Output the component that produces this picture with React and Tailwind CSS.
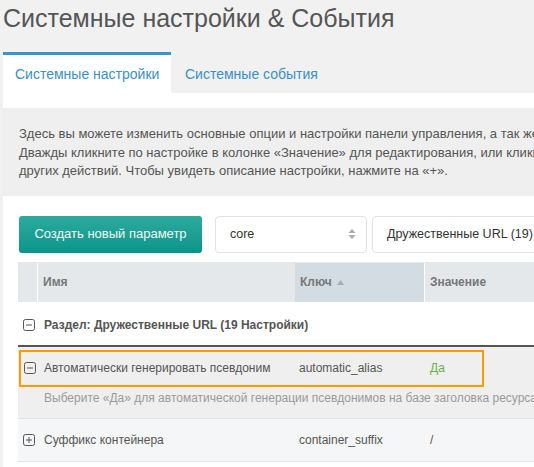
import { useState } from 'react'

const FONT = { fontFamily: '"Liberation Sans", Arial, sans-serif' }

function BoxIcon({ plus }) {
  return (
    <svg width="12" height="12" viewBox="0 0 12 12" fill="none" aria-hidden="true" className="text-[#555]">
      <rect x="0.5" y="0.5" width="11" height="11" rx="2" stroke="currentColor" />
      <path d="M3 6h6" stroke="currentColor" />
      {plus && <path d="M6 3v6" stroke="currentColor" />}
    </svg>
  )
}

function SelectBox({ value, className }) {
  return (
    <div className={`flex h-[37px] items-center justify-between rounded-[4px] border border-[#e2e2e2] bg-white pl-[14px] pr-[10px] text-[12.5px] text-[#333] ${className}`}>
      <span className="whitespace-nowrap">{value}</span>
      <svg width="8" height="12" viewBox="0 0 8 12" aria-hidden="true" className="text-[#aaa]">
        <path d="M4 1 7.5 5H.5Z" fill="currentColor" />
        <path d="M4 11 .5 7h7Z" fill="currentColor" />
      </svg>
    </div>
  )
}

export default function App() {
  const [tab, setTab] = useState(0)

  return (
    <div className="h-screen overflow-hidden bg-[#f1f1f1]" style={FONT}>
      {/* Title */}
      <h1 className="whitespace-nowrap pl-[3px] pt-[3px] text-[25px] leading-[30px] text-[#555]">
        Системные настройки &amp; События
      </h1>

      {/* Tabs */}
      <div className="ml-[3px] mt-[19px] flex w-[800px] items-end">
        <button
          type="button"
          onClick={() => setTab(0)}
          className={`h-[41px] w-[168px] border-t-[3px] pl-[12px] pt-[1px] text-left text-[14px] ${tab === 0 ? 'border-[#3697cd] bg-white text-[#3a8fc6]' : 'border-transparent text-[#3a8fc6]'}`}
        >
          Системные настройки
        </button>
        <button
          type="button"
          onClick={() => setTab(1)}
          className={`h-[41px] border-t-[3px] px-[14px] pt-[1px] text-left text-[14px] ${tab === 1 ? 'border-[#3697cd] bg-white text-[#3a8fc6]' : 'border-transparent text-[#3a8fc6]'}`}
        >
          Системные события
        </button>
      </div>

      {/* Panel */}
      <div className="ml-[3px] w-[800px] bg-white pt-[15px]">
        <div className="bg-[#efefef] px-[16px] pb-[15px] pt-[17px] text-[13px] leading-[18.5px] text-[#555]">
          <p className="whitespace-nowrap">Здесь вы можете изменить основные опции и настройки панели управления, а так же просмотреть системную информацию.</p>
          <p className="whitespace-nowrap">Дважды кликните по настройке в колонке «Значение» для редактирования, или кликните правой кнопкой мыши для</p>
          <p className="whitespace-nowrap">других действий. Чтобы увидеть описание настройки, нажмите на «+».</p>
        </div>

        <div className="pl-[15px] pt-[20px]">
          {/* Controls */}
          <div className="flex items-center gap-[13px] pl-[1px]">
            <button
              type="button"
              className="h-[37px] w-[183px] rounded-[3px] bg-gradient-to-b from-[#2caa9d] to-[#08958a] text-[13px] text-[#eef8f7]"
            >
              Создать новый параметр
            </button>
            <SelectBox value="core" className="w-[152px]" />
            <SelectBox value="Дружественные URL (19)" className="-ml-[8px] w-[200px]" />
          </div>

          {/* Table */}
          <div className="mt-[9px] w-[760px]">
            <div className="grid h-[40px] grid-cols-[20px_257px_130px_1fr] bg-[#e4e8eb] pt-[1px] text-[12px] font-bold text-[#777]">
              <div className="border-r border-white" />
              <div className="flex items-center pl-[5px]">Имя</div>
              <div className="flex items-center gap-[5px] border-r border-white bg-[#d4dce3] pl-[5px]">
                Ключ
                <svg width="7" height="5" viewBox="0 0 7 5" aria-hidden="true" className="text-[#aab]">
                  <path d="M3.5 0 7 5H0Z" fill="currentColor" />
                </svg>
              </div>
              <div className="flex items-center pl-[5px]">Значение</div>
            </div>

            {/* Group row */}
            <div className="grid h-[45px] grid-cols-[20px_1fr] items-center border-b-2 border-[#555] bg-white pt-[3px] text-[12px] font-bold text-[#555]">
              <div className="flex justify-center pl-[1px]"><BoxIcon /></div>
              <div className="whitespace-nowrap pl-[6px]">Раздел: Дружественные URL (19 Настройки)</div>
            </div>

            {/* Expanded row */}
            <div className="border-b border-[#e3e3e3] bg-[#efefef] pb-[11px] pl-[1px] pt-[3px]">
              <div className="grid h-[37px] w-[465px] grid-cols-[17px_257px_131px_1fr] items-center border-2 border-[#ff9a00] text-[12px] text-[#555]">
                <div className="flex justify-center pl-[1px]"><BoxIcon /></div>
                <div className="whitespace-nowrap pl-[6px]">Автоматически генерировать псевдоним</div>
                <div className="pl-[4px]">automatic_alias</div>
                <div className="pl-[4px] text-[#67b346]">Да</div>
              </div>
              <p className="mt-[2px] whitespace-nowrap pl-[25px] text-[12px] leading-[18px] text-[#9a9a9a]">
                Выберите «Да» для автоматической генерации псевдонимов на базе заголовка ресурса.
              </p>
            </div>

            {/* Collapsed row */}
            <div className="grid h-[43px] grid-cols-[20px_257px_130px_1fr] items-center border-b border-[#e6e6e6] bg-[#f5f6f8] text-[12px] text-[#555]">
              <div className="flex justify-center pl-[1px]"><BoxIcon plus /></div>
              <div className="whitespace-nowrap pl-[6px]">Суффикс контейнера</div>
              <div className="pl-[4px]">container_suffix</div>
              <div className="pl-[5px]">/</div>
            </div>
          </div>
        </div>
        <div className="h-[40px]" />
      </div>
    </div>
  )
}
